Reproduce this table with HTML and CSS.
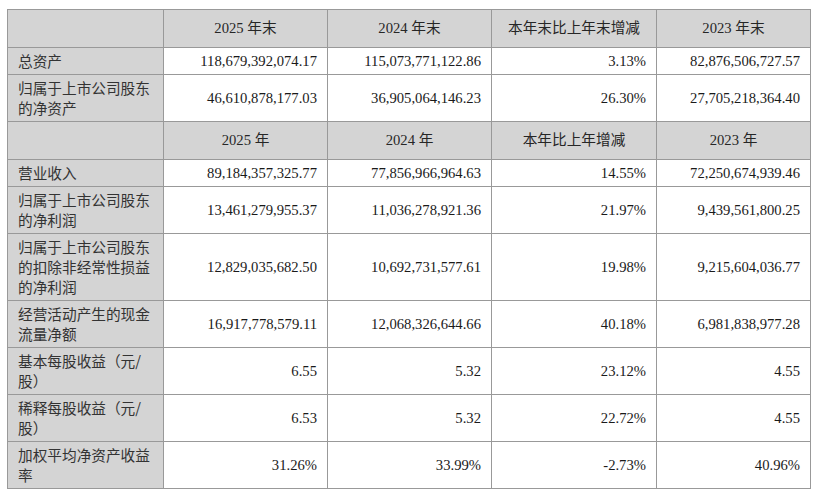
FILE: index.html
```html
<!DOCTYPE html>
<html lang="zh-CN">
<head>
<meta charset="utf-8">
<title>主要会计数据</title>
<link rel="stylesheet" href="styles.css">
</head>
<body>
<div class="page">
<table class="fin">
<colgroup>
<col class="c1"><col class="c2"><col class="c3"><col class="c4"><col class="c5">
</colgroup>
<tbody>
<tr class="head">
<td class="label"></td><td>2025 年末</td><td>2024 年末</td><td>本年末比上年末增减</td><td>2023 年末</td>
</tr>
<tr>
<td class="label">总资产</td><td class="num">118,679,392,074.17</td><td class="num">115,073,771,122.86</td><td class="num">3.13%</td><td class="num">82,876,506,727.57</td>
</tr>
<tr>
<td class="label">归属于上市公司股东<br>的净资产</td><td class="num">46,610,878,177.03</td><td class="num">36,905,064,146.23</td><td class="num">26.30%</td><td class="num">27,705,218,364.40</td>
</tr>
<tr class="head">
<td class="label"></td><td>2025 年</td><td>2024 年</td><td>本年比上年增减</td><td>2023 年</td>
</tr>
<tr>
<td class="label">营业收入</td><td class="num">89,184,357,325.77</td><td class="num">77,856,966,964.63</td><td class="num">14.55%</td><td class="num">72,250,674,939.46</td>
</tr>
<tr>
<td class="label">归属于上市公司股东<br>的净利润</td><td class="num">13,461,279,955.37</td><td class="num">11,036,278,921.36</td><td class="num">21.97%</td><td class="num">9,439,561,800.25</td>
</tr>
<tr>
<td class="label">归属于上市公司股东<br>的扣除非经常性损益<br>的净利润</td><td class="num">12,829,035,682.50</td><td class="num">10,692,731,577.61</td><td class="num">19.98%</td><td class="num">9,215,604,036.77</td>
</tr>
<tr>
<td class="label">经营活动产生的现金<br>流量净额</td><td class="num">16,917,778,579.11</td><td class="num">12,068,326,644.66</td><td class="num">40.18%</td><td class="num">6,981,838,977.28</td>
</tr>
<tr>
<td class="label">基本每股收益（元/<br>股）</td><td class="num">6.55</td><td class="num">5.32</td><td class="num">23.12%</td><td class="num">4.55</td>
</tr>
<tr>
<td class="label">稀释每股收益（元/<br>股）</td><td class="num">6.53</td><td class="num">5.32</td><td class="num">22.72%</td><td class="num">4.55</td>
</tr>
<tr>
<td class="label">加权平均净资产收益<br>率</td><td class="num">31.26%</td><td class="num">33.99%</td><td class="num">-2.73%</td><td class="num">40.96%</td>
</tr>
</tbody>
</table>
</div>
</body>
</html>
```
FILE: styles.css
```css
html, body {
  margin: 0;
  padding: 0;
  background: #ffffff;
}
.page {
  padding: 9px 0 0 7px;
}
.fin {
  border-collapse: collapse;
  table-layout: fixed;
  width: 803px;
  font-family: "Liberation Serif", "Noto Sans CJK SC", serif;
  font-size: 14.67px;
  line-height: 20px;
  color: #1a1a1a;
}
.c1 { width: 156px; }
.c2 { width: 164px; }
.c3 { width: 164px; }
.c4 { width: 165px; }
.c5 { width: 154px; }
.fin td {
  border: 1px solid #999999;
  padding: 3px 10px;
  vertical-align: middle;
  white-space: nowrap;
}
.fin .label {
  background: #d4d4d4;
  text-align: left;
  font-family: "Noto Sans CJK SC", sans-serif;
  color: #333333;
  padding-left: 10px;
  padding-right: 4px;
}
.fin .num {
  text-align: right;
}
.fin .head td {
  background: #d4d4d4;
  text-align: center;
  color: #262626;
  padding-top: 8px;
  padding-bottom: 9px;
}
```
